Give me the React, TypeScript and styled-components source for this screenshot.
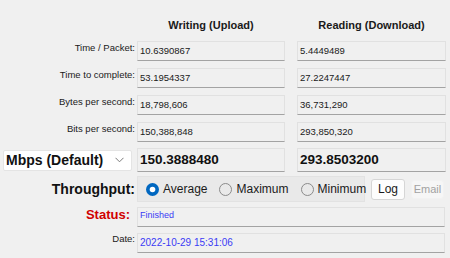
import React from "react";
import styled, { createGlobalStyle } from "styled-components";

const Global = createGlobalStyle`
  html, body { margin: 0; padding: 0; background: #f0f0f0; }
  body { font-family: "Liberation Sans", Arial, sans-serif; color: #1a1a1a; }
`;

const Page = styled.div`
  width: 450px;
  height: 258px;
  padding-top: 18px;
  box-sizing: border-box;
  display: flex;
  flex-direction: column;
  overflow: hidden;
`;

const HeaderRow = styled.div`
  display: flex;
  gap: 12px;
  margin-left: 137px;
  height: 14px;
  margin-bottom: 9px;
`;

const HeaderCell = styled.div<{ $w: number }>`
  width: ${(p) => p.$w}px;
  text-align: center;
  font-weight: bold;
  font-size: 11px;
  line-height: 14px;
`;

const Rows = styled.div`
  display: flex;
  flex-direction: column;
  gap: 7px;
`;

const Row = styled.div<{ $mt?: number; $h?: number; $align?: string }>`
  display: flex;
  align-items: ${(p) => p.$align || "flex-start"};
  margin-top: ${(p) => p.$mt || 0}px;
  ${(p) => (p.$h ? `height: ${p.$h}px;` : "")}
`;

const Label = styled.div<{ $pt?: number }>`
  width: 135px;
  box-sizing: border-box;
  text-align: right;
  font-size: 9.5px;
  line-height: 12px;
  padding-top: ${(p) => p.$pt ?? 1}px;
  margin-right: 2px;
  color: #1a1a1a;
`;

const BoldLabel = styled.div<{ $color?: string; $size: number; $pr?: number }>`
  width: 135px;
  box-sizing: border-box;
  text-align: right;
  font-weight: bold;
  font-size: ${(p) => p.$size}px;
  padding-right: ${(p) => p.$pr || 0}px;
  margin-right: 2px;
  color: ${(p) => p.$color || "#111"};
`;

const Field = styled.div<{ $w: number; $h?: number; $ml?: number }>`
  width: ${(p) => p.$w}px;
  height: ${(p) => p.$h || 20}px;
  margin-left: ${(p) => p.$ml || 0}px;
  box-sizing: border-box;
  border: 1px solid #e1e1e1;
  border-bottom: 1px solid #a3a3a3;
  background: #f0f0f0;
  padding: 0 2px 2px;
  display: flex;
  align-items: center;
  font-size: 9.5px;
  color: #1a1a1a;
  white-space: nowrap;
`;

const BigField = styled(Field)`
  font-size: 13.5px;
  font-weight: bold;
  padding-bottom: 1px;
  color: #111;
`;

const BlueField = styled(Field)<{ $fs: number }>`
  color: #3b3bf5;
  font-size: ${(p) => p.$fs}px;
  align-items: flex-start;
  padding-top: ${(p) => (p.$fs < 9.5 ? 2 : 3)}px;
`;

const Dropdown = styled.div`
  width: 129px;
  height: 21px;
  margin-left: 3px;
  margin-right: 5px;
  box-sizing: border-box;
  background: #fff;
  border: 1px solid #e4e4e4;
  border-radius: 2px;
  display: flex;
  align-items: center;
  justify-content: space-between;
  padding: 0 7px 0 2px;
  font-weight: bold;
  font-size: 14px;
  color: #111;
`;

const RadioGroup = styled.div`
  width: 228px;
  height: 26px;
  box-sizing: border-box;
  background: #e9e9e9;
  border: 1px solid #e2e2e2;
  display: flex;
  align-items: center;
  padding-left: 8px;
  gap: 12px;
`;

const RadioItem = styled.label`
  display: flex;
  align-items: center;
  gap: 4px;
  font-size: 12px;
  color: #1a1a1a;
`;

const Button = styled.div<{ $disabled?: boolean; $w: number; $h: number; $ml: number }>`
  width: ${(p) => p.$w}px;
  height: ${(p) => p.$h}px;
  margin-left: ${(p) => p.$ml}px;
  box-sizing: border-box;
  display: flex;
  align-items: center;
  justify-content: center;
  border-radius: 3px;
  background: ${(p) => (p.$disabled ? "#f6f6f6" : "#fdfdfd")};
  border: 1px solid ${(p) => (p.$disabled ? "#f2f2f2" : "#d6d6d6")};
  color: ${(p) => (p.$disabled ? "#a2a2a2" : "#1a1a1a")};
  font-size: ${(p) => (p.$disabled ? 11 : 12)}px;
`;

const Radio = ({ checked }: { checked?: boolean }) =>
  checked ? (
    <svg width="13" height="13" viewBox="0 0 13 13">
      <circle cx="6.5" cy="6.5" r="6.5" fill="#0067c0" />
      <circle cx="6.5" cy="6.5" r="2.8" fill="#fff" />
    </svg>
  ) : (
    <svg width="13" height="13" viewBox="0 0 13 13">
      <circle cx="6.5" cy="6.5" r="6" fill="none" stroke="#8a8a8a" strokeWidth="1" />
    </svg>
  );

const Chevron = () => (
  <svg width="9" height="6" viewBox="0 0 9 6">
    <path d="M0.5 0.8 L4.5 4.8 L8.5 0.8" fill="none" stroke="#7a7a7a" strokeWidth="1" />
  </svg>
);

const data = [
  ["Time / Packet:", "10.6390867", "5.4449489"],
  ["Time to complete:", "53.1954337", "27.2247447"],
  ["Bytes per second:", "18,798,606", "36,731,290"],
  ["Bits per second:", "150,388,848", "293,850,320"],
];

export default function App() {
  return (
    <>
      <Global />
      <Page>
        <HeaderRow>
          <HeaderCell $w={148}>Writing (Upload)</HeaderCell>
          <HeaderCell $w={149}>Reading (Download)</HeaderCell>
        </HeaderRow>
        <Rows>
          {data.map(([l, a, b]) => (
            <Row key={l}>
              <Label>{l}</Label>
              <Field $w={148}>{a}</Field>
              <Field $w={149} $ml={12}>{b}</Field>
            </Row>
          ))}
        </Rows>
        <Row $mt={6} $align="center">
          <Dropdown>
            <span>Mbps (Default)</span>
            <Chevron />
          </Dropdown>
          <BigField $w={148} $h={24}>150.3888480</BigField>
          <BigField $w={149} $h={24} $ml={12}>293.8503200</BigField>
        </Row>
        <Row $mt={4} $align="center" $h={26}>
          <BoldLabel $size={14}>Throughput:</BoldLabel>
          <RadioGroup>
            <RadioItem><Radio checked />Average</RadioItem>
            <RadioItem><Radio />Maximum</RadioItem>
            <RadioItem><Radio />Minimum</RadioItem>
          </RadioGroup>
          <Button $w={34} $h={21} $ml={6}>Log</Button>
          <Button $w={33} $h={19} $ml={6} $disabled>Email</Button>
        </Row>
        <Row $mt={5}>
          <BoldLabel $size={13} $color="#d00000" $pr={5}>Status:</BoldLabel>
          <BlueField $w={308} $fs={9}>Finished</BlueField>
        </Row>
        <Row $mt={6}>
          <Label $pt={0}>Date:</Label>
          <BlueField $w={308} $fs={10}>2022-10-29 15:31:06</BlueField>
        </Row>
      </Page>
    </>
  );
}
